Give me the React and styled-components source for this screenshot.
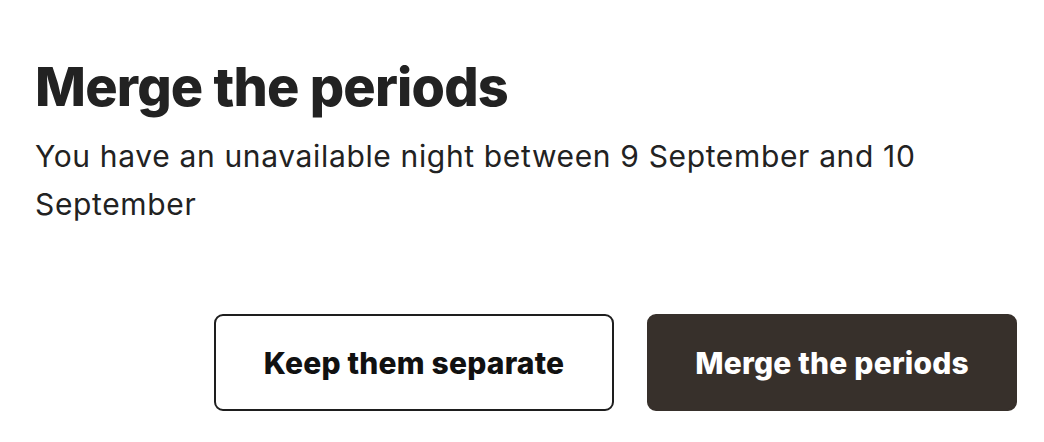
import React from 'react'
import styled, { createGlobalStyle } from "styled-components";

const GlobalStyle = createGlobalStyle`
  body {
    margin: 0;
    background: #fff;
    font-family: "Inter", "Lato", sans-serif;
    color: #222;
  }
`;

const StyledDialog = styled.div`
  padding: 55px 27px 0 35px;
`;

const StyledTitle = styled.h1`
  margin: 0;
  font-size: 54px;
  font-weight: 800;
  line-height: 64px;
  letter-spacing: -0.8px;
  color: #222;
`;

const StyledMessage = styled.p`
  margin: 13px 0 0;
  font-size: 30px;
  line-height: 48px;
  letter-spacing: 0.65px;
  color: #222;
  max-width: 900px;
`;

const StyledActions = styled.div`
  display: flex;
  justify-content: flex-end;
  gap: 33px;
  margin-top: 86px;
`;

const StyledButton = styled.button`
  height: 97px;
  padding: 0 ${(p) => (p.$primary ? "46px" : "48px")};
  border-radius: 9px;
  border: 2px solid ${(p) => (p.$primary ? "#37302b" : "#1e1e1e")};
  background: ${(p) => (p.$primary ? "#37302b" : "#fff")};
  color: ${(p) => (p.$primary ? "#fff" : "#111")};
  font-family: inherit;
  font-size: 30px;
  font-weight: 800;
  letter-spacing: 0.2px;
  cursor: pointer;
`;

function App() {
    return (
        <>
            <GlobalStyle />
            <StyledDialog>
                <StyledTitle>Merge the periods</StyledTitle>
                <StyledMessage>
                    You have an unavailable night between 9 September and 10 September
                </StyledMessage>
                <StyledActions>
                    <StyledButton>Keep them separate</StyledButton>
                    <StyledButton $primary>Merge the periods</StyledButton>
                </StyledActions>
            </StyledDialog>
        </>
    )
}

export default App
